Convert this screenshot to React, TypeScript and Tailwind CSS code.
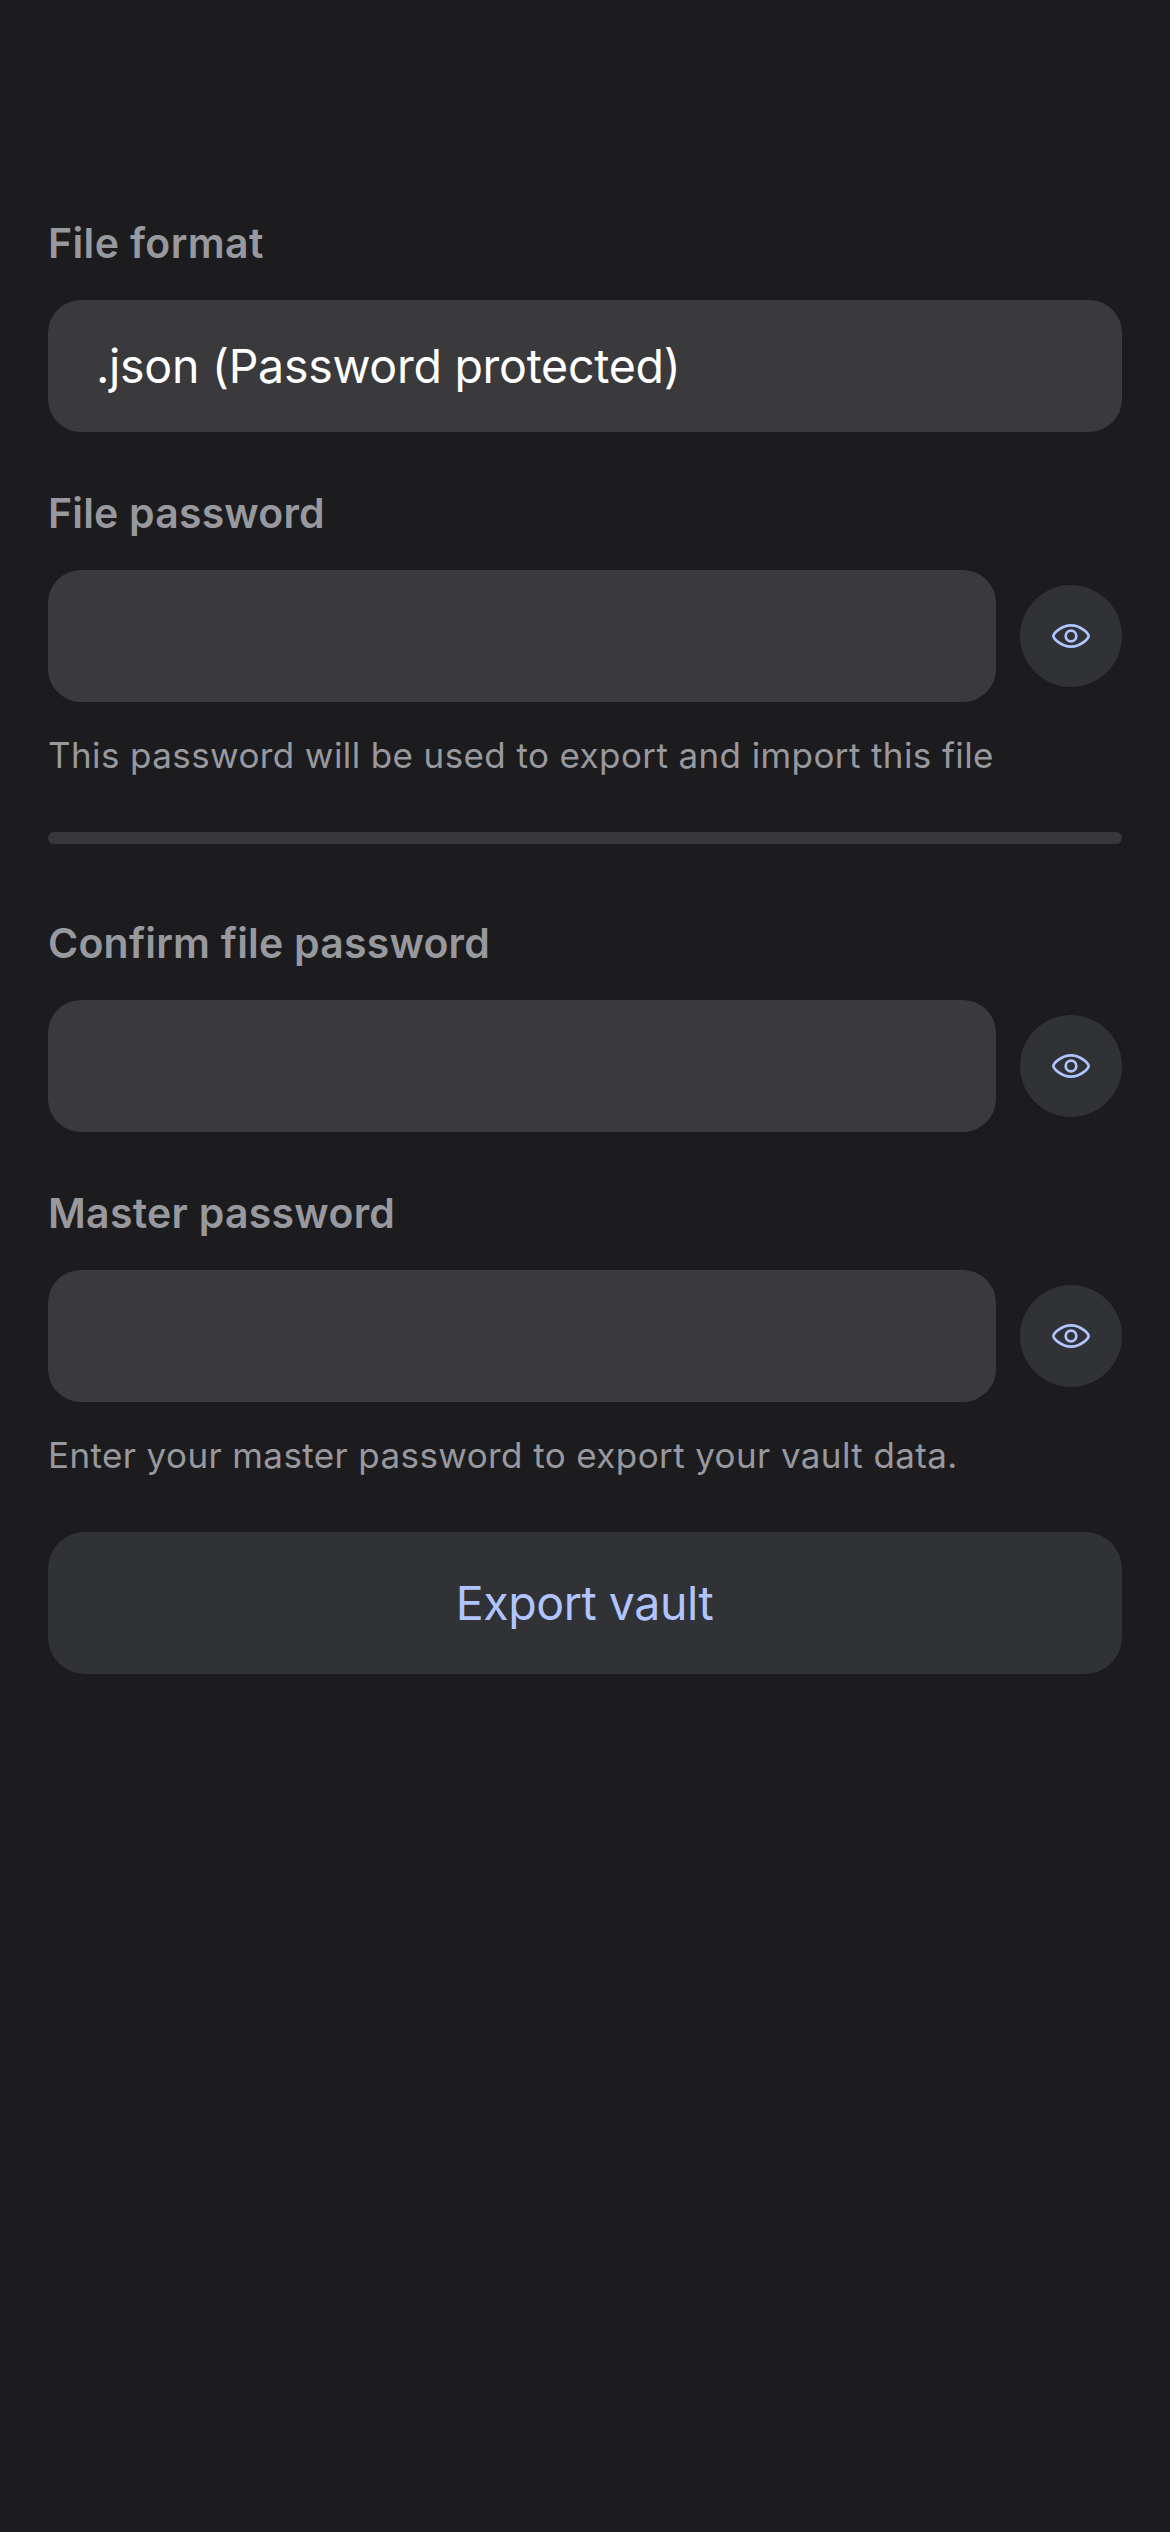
const EyeButton = () => (
  <button className="flex size-[102px] shrink-0 items-center justify-center rounded-full bg-[#303235]" aria-label="Toggle visibility">
    <svg width="38" height="24" viewBox="0 0 38 24" fill="none" stroke="#b0c4ff" strokeWidth="2.7">
      <path d="M1.35 12C1.35 9.8 8.8 1.35 19 1.35S36.65 9.8 36.65 12S29.2 22.65 19 22.65S1.35 14.2 1.35 12Z" />
      <circle cx="19" cy="12" r="5.3" />
    </svg>
  </button>
);

const Label = ({ children, className }: { children: string; className: string }) => (
  <div className="flex h-[54px] items-center pt-0.5 text-[41px] font-semibold text-[#98989f]">
    <span className={`whitespace-nowrap ${className}`}>{children}</span>
  </div>
);

const Hint = ({ children }: { children: string }) => (
  <p className="mt-[29px] flex h-12 items-center whitespace-nowrap text-[35px] tracking-[0.395px] text-[#98989f]">{children}</p>
);

const PasswordRow = () => (
  <div className="mt-[30px] flex items-center gap-6">
    <div className="h-[132px] flex-1 rounded-[33px] bg-[#3a3a3c]" />
    <EyeButton />
  </div>
);

export default function App() {
  return (
    <main className="flex h-[2532px] w-[1170px] flex-col bg-[#1c1c1e] px-12 pt-[216px] font-['Inter',sans-serif]">
      <Label className="tracking-[0.38px]">File format</Label>
      <div className="mt-[30px] mb-[54px] flex h-[132px] items-center rounded-[33px] bg-[#3a3a3c] pt-0.5 pl-12 text-[46.5px] text-white">
        <span className="whitespace-nowrap tracking-[-0.28px]">.json (Password protected)</span>
      </div>
      <Label className="tracking-[0.18px]">File password</Label>
      <PasswordRow />
      <Hint>This password will be used to export and import this file</Hint>
      <div className="mt-[53px] mb-[72px] h-3 rounded-full bg-[#38383a]" />
      <Label className="tracking-[0.21px]">Confirm file password</Label>
      <PasswordRow />
      <div className="h-[54px]" />
      <Label className="tracking-[0.27px]">Master password</Label>
      <PasswordRow />
      <Hint>Enter your master password to export your vault data.</Hint>
      <button className="mt-[53px] flex h-[142px] items-center justify-center rounded-[37px] bg-[#303235] pt-0.5 pr-px text-[46.5px] tracking-[-0.45px] text-[#b0c4ff]">
        Export vault
      </button>
    </main>
  );
}
